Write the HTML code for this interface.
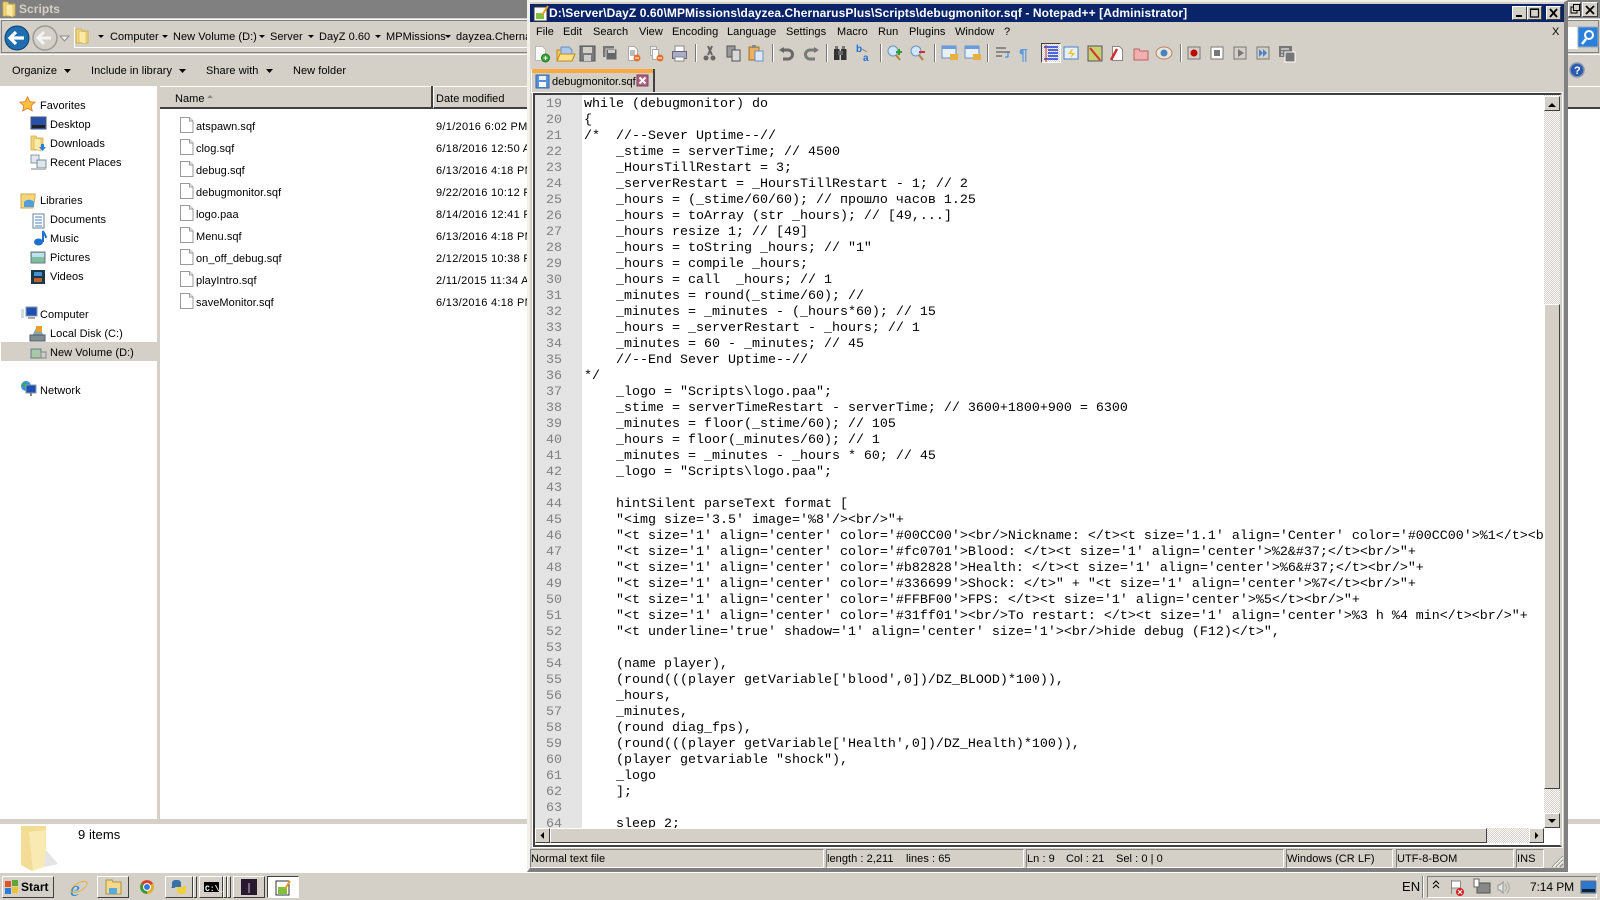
<!DOCTYPE html>
<html><head><meta charset="utf-8"><title>Notepad++</title>
<style>
html,body{margin:0;padding:0;width:1600px;height:900px;overflow:hidden;background:#fff}
body{font-family:"Liberation Sans",sans-serif;font-size:11px;color:#000;position:relative}
.a{position:absolute}
.t{position:absolute;white-space:nowrap;line-height:16px;letter-spacing:.05px;font-size:11px}
.q{letter-spacing:.3px}
.g{background:#d4d0c8}
.r{position:absolute;box-sizing:border-box;background:#d4d0c8;border:1px solid;border-color:#fff #404040 #404040 #fff}
.s{position:absolute;box-sizing:border-box;background:#d4d0c8;border:1px solid;border-color:#808080 #fff #fff #808080}
.d{position:absolute;background:repeating-conic-gradient(#fff 0 25%,#d4d0c8 0 50%) 0 0/2px 2px}
pre{margin:0;font-family:"Liberation Mono",monospace;font-size:13.33px;line-height:16px;position:absolute}
svg{position:absolute;left:0;top:0}
</style></head><body>
<!-- Explorer -->
<div class="a" style="left:0;top:0;width:1600px;height:18px;background:#808080"></div>
<div class="t" style="left:19px;top:2px;font-weight:bold;color:#d4d0c8;font-size:12px;line-height:14px">Scripts</div>
<div class="a g" style="left:0;top:18px;width:1600px;height:68px"></div>
<div class="a" style="left:0;top:19px;width:1600px;height:1px;background:#fff"></div>
<div class="a" style="left:1px;top:20px;width:1598px;height:33px;border:1px solid #808080;box-sizing:border-box"></div>
<div class="a" style="left:74px;top:27px;width:453px;height:21px;border-left:1px solid #fff;border-bottom:1px solid #fff;box-sizing:border-box"></div>
<div class="a" style="left:0;top:54px;width:1600px;height:1px;background:#fff"></div>
<div class="t" style="left:110px;top:29px">Computer</div>
<div class="t" style="left:173px;top:29px">New Volume (D:)</div>
<div class="t" style="left:270px;top:29px">Server</div>
<div class="t" style="left:319px;top:29px">DayZ 0.60</div>
<div class="t" style="left:386px;top:29px">MPMissions</div>
<div class="a" style="left:456px;top:29px;width:71px;overflow:hidden"><div class="t" style="position:static">dayzea.ChernarusPlus</div></div>
<div class="t" style="left:12px;top:63px">Organize</div>
<div class="t" style="left:91px;top:63px">Include in library</div>
<div class="t" style="left:206px;top:63px">Share with</div>
<div class="t" style="left:293px;top:63px">New folder</div>
<!-- nav -->
<div class="a g" style="left:157px;top:86px;width:3px;height:734px"></div>
<div class="a g" style="left:1px;top:342px;width:156px;height:19px"></div>
<div class="t" style="left:40px;top:98px">Favorites</div>
<div class="t" style="left:50px;top:117px">Desktop</div>
<div class="t" style="left:50px;top:136px">Downloads</div>
<div class="t" style="left:50px;top:155px">Recent Places</div>
<div class="t" style="left:40px;top:193px">Libraries</div>
<div class="t" style="left:50px;top:212px">Documents</div>
<div class="t" style="left:50px;top:231px">Music</div>
<div class="t" style="left:50px;top:250px">Pictures</div>
<div class="t" style="left:50px;top:269px">Videos</div>
<div class="t" style="left:40px;top:307px">Computer</div>
<div class="t" style="left:50px;top:326px">Local Disk (C:)</div>
<div class="t" style="left:50px;top:345px">New Volume (D:)</div>
<div class="t" style="left:40px;top:383px">Network</div>
<!-- headers -->
<div class="a g" style="left:160px;top:86px;width:271px;height:23px;border-top:1px solid #fff;border-bottom:2px solid #404040;box-sizing:border-box"></div>
<div class="a" style="left:431px;top:86px;width:2px;height:23px;background:#404040"></div>
<div class="a g" style="left:433px;top:86px;width:94px;height:23px;border-top:1px solid #fff;border-bottom:2px solid #404040;box-sizing:border-box;border-left:1px solid #fff"></div>
<div class="a g" style="left:1568px;top:86px;width:32px;height:23px;border-top:1px solid #fff;border-bottom:2px solid #404040;box-sizing:border-box"></div>
<div class="t" style="left:175px;top:91px">Name</div>
<div class="t" style="left:436px;top:91px">Date modified</div>
<div class="t" style="left:196px;top:119px">atspawn.sqf</div><div class="t q" style="left:436px;top:119px">9/1/2016 6:02 PM</div>
<div class="t" style="left:196px;top:141px">clog.sqf</div><div class="t q" style="left:436px;top:141px">6/18/2016 12:50 A</div>
<div class="t" style="left:196px;top:163px">debug.sqf</div><div class="t q" style="left:436px;top:163px">6/13/2016 4:18 PM</div>
<div class="t" style="left:196px;top:185px">debugmonitor.sqf</div><div class="t q" style="left:436px;top:185px">9/22/2016 10:12 P</div>
<div class="t" style="left:196px;top:207px">logo.paa</div><div class="t q" style="left:436px;top:207px">8/14/2016 12:41 P</div>
<div class="t" style="left:196px;top:229px">Menu.sqf</div><div class="t q" style="left:436px;top:229px">6/13/2016 4:18 PM</div>
<div class="t" style="left:196px;top:251px">on_off_debug.sqf</div><div class="t q" style="left:436px;top:251px">2/12/2015 10:38 P</div>
<div class="t" style="left:196px;top:273px">playIntro.sqf</div><div class="t q" style="left:436px;top:273px">2/11/2015 11:34 A</div>
<div class="t" style="left:196px;top:295px">saveMonitor.sqf</div><div class="t q" style="left:436px;top:295px">6/13/2016 4:18 PM</div>
<!-- details -->
<div class="a g" style="left:0;top:819px;width:1600px;height:5px"></div>
<div class="t" style="left:78px;top:828px;font-size:13px;line-height:14px">9 items</div>
<!-- Notepad++ window -->
<div class="a g" style="left:527px;top:0;width:1041px;height:872px;border:solid;border-width:2px 4px 4px 3px;border-color:#f2f0ea #808080 #808080 #f2f0ea;box-sizing:border-box"></div>
<div class="a" style="left:530px;top:4px;width:1034px;height:18px;background:#0a246a"></div>
<div class="t" style="left:549px;top:6px;color:#fff;font-weight:bold;font-size:12px;letter-spacing:.09px;line-height:14px">D:\Server\DayZ 0.60\MPMissions\dayzea.ChernarusPlus\Scripts\debugmonitor.sqf - Notepad++ [Administrator]</div>
<div class="r" style="left:1512px;top:6px;width:15px;height:14px"></div>
<div class="r" style="left:1527px;top:6px;width:15px;height:14px"></div>
<div class="r" style="left:1546px;top:6px;width:15px;height:14px"></div>
<!-- menu -->
<div class="t" style="left:536px;top:24px">File</div>
<div class="t" style="left:563px;top:24px">Edit</div>
<div class="t" style="left:593px;top:24px">Search</div>
<div class="t" style="left:639px;top:24px">View</div>
<div class="t" style="left:672px;top:24px">Encoding</div>
<div class="t" style="left:727px;top:24px">Language</div>
<div class="t" style="left:786px;top:24px">Settings</div>
<div class="t" style="left:837px;top:24px">Macro</div>
<div class="t" style="left:878px;top:24px">Run</div>
<div class="t" style="left:909px;top:24px">Plugins</div>
<div class="t" style="left:955px;top:24px">Window</div>
<div class="t" style="left:1004px;top:24px">?</div>
<div class="t" style="left:1552px;top:24px">X</div>
<div class="a" style="left:1041px;top:43px;width:20px;height:20px;box-sizing:border-box;border:1px solid;border-color:#404040 #fff #fff #404040;background:repeating-conic-gradient(#fff 0 25%,#d4d0c8 0 50%) 0 0/2px 2px"></div>
<!-- tab -->
<div class="a" style="left:531px;top:69px;width:124px;height:24px;background:#d4d0c8;box-sizing:border-box;border-right:2px solid #404040;border-left:1px solid #fff"></div>
<div class="a" style="left:532px;top:69px;width:121px;height:4px;background:#fcaa3d"></div>
<div class="t" style="left:552px;top:74px;letter-spacing:-.05px">debugmonitor.sqf</div>
<!-- editor -->
<div class="a" style="left:533px;top:93px;width:1029px;height:754px;box-sizing:border-box;border:2px solid;border-color:#404040 #d4d0c8 #404040 #404040;background:#fff;outline:1px solid #fff"></div>
<div class="a" style="left:535px;top:95px;width:47px;height:733px;background:#e4e4e4"></div>
<div class="a" style="left:535px;top:95px;width:1009px;height:733px;overflow:hidden">
<pre style="left:0;top:2px;width:27px;text-align:right;color:#808080">19
20
21
22
23
24
25
26
27
28
29
30
31
32
33
34
35
36
37
38
39
40
41
42
43
44
45
46
47
48
49
50
51
52
53
54
55
56
57
58
59
60
61
62
63
64</pre>
<pre style="left:49px;top:2px;color:#000">while (debugmonitor) do
{
/*  //--Sever Uptime--//
    _stime = serverTime; // 4500
    _HoursTillRestart = 3;
    _serverRestart = _HoursTillRestart - 1; // 2
    _hours = (_stime/60/60); // прошло часов 1.25
    _hours = toArray (str _hours); // [49,...]
    _hours resize 1; // [49]
    _hours = toString _hours; // "1"
    _hours = compile _hours;
    _hours = call  _hours; // 1
    _minutes = round(_stime/60); //
    _minutes = _minutes - (_hours*60); // 15
    _hours = _serverRestart - _hours; // 1
    _minutes = 60 - _minutes; // 45
    //--End Sever Uptime--//
*/
    _logo = "Scripts\logo.paa";
    _stime = serverTimeRestart - serverTime; // 3600+1800+900 = 6300
    _minutes = floor(_stime/60); // 105
    _hours = floor(_minutes/60); // 1
    _minutes = _minutes - _hours * 60; // 45
    _logo = "Scripts\logo.paa";

    hintSilent parseText format [
    "&lt;img size='3.5' image='%8'/&gt;&lt;br/&gt;"+
    "&lt;t size='1' align='center' color='#00CC00'&gt;&lt;br/&gt;Nickname: &lt;/t&gt;&lt;t size='1.1' align='Center' color='#00CC00'&gt;%1&lt;/t&gt;&lt;br/&gt;"+
    "&lt;t size='1' align='center' color='#fc0701'&gt;Blood: &lt;/t&gt;&lt;t size='1' align='center'&gt;%2&amp;#37;&lt;/t&gt;&lt;br/&gt;"+
    "&lt;t size='1' align='center' color='#b82828'&gt;Health: &lt;/t&gt;&lt;t size='1' align='center'&gt;%6&amp;#37;&lt;/t&gt;&lt;br/&gt;"+
    "&lt;t size='1' align='center' color='#336699'&gt;Shock: &lt;/t&gt;" + "&lt;t size='1' align='center'&gt;%7&lt;/t&gt;&lt;br/&gt;"+
    "&lt;t size='1' align='center' color='#FFBF00'&gt;FPS: &lt;/t&gt;&lt;t size='1' align='center'&gt;%5&lt;/t&gt;&lt;br/&gt;"+
    "&lt;t size='1' align='center' color='#31ff01'&gt;&lt;br/&gt;To restart: &lt;/t&gt;&lt;t size='1' align='center'&gt;%3 h %4 min&lt;/t&gt;&lt;br/&gt;"+
    "&lt;t underline='true' shadow='1' align='center' size='1'&gt;&lt;br/&gt;hide debug (F12)&lt;/t&gt;",

    (name player),
    (round(((player getVariable['blood',0])/DZ_BLOOD)*100)),
    _hours,
    _minutes,
    (round diag_fps),
    (round(((player getVariable['Health',0])/DZ_Health)*100)),
    (player getvariable "shock"),
    _logo
    ];

    sleep 2;</pre>
</div>
<!-- scrollbars -->
<div class="d" style="left:1544px;top:95px;width:16px;height:733px"></div>
<div class="r" style="left:1544px;top:96px;width:16px;height:15px"></div>
<div class="r" style="left:1544px;top:304px;width:16px;height:485px"></div>
<div class="r" style="left:1544px;top:813px;width:16px;height:15px"></div>
<div class="d" style="left:535px;top:828px;width:1009px;height:15px"></div>
<div class="r" style="left:535px;top:828px;width:15px;height:15px"></div>
<div class="r" style="left:550px;top:828px;width:937px;height:15px"></div>
<div class="r" style="left:1529px;top:828px;width:15px;height:15px"></div>
<!-- status -->
<div class="s" style="left:530px;top:849px;width:294px;height:19px"></div>
<div class="s" style="left:826px;top:849px;width:198px;height:19px"></div>
<div class="s" style="left:1026px;top:849px;width:258px;height:19px"></div>
<div class="s" style="left:1286px;top:849px;width:107px;height:19px"></div>
<div class="s" style="left:1396px;top:849px;width:118px;height:19px"></div>
<div class="s" style="left:1516px;top:849px;width:28px;height:19px"></div>
<div class="t" style="left:531px;top:851px">Normal text file</div>
<div class="t" style="left:827px;top:851px">length : 2,211</div>
<div class="t" style="left:906px;top:851px">lines : 65</div>
<div class="t" style="left:1027px;top:851px">Ln : 9</div>
<div class="t" style="left:1066px;top:851px">Col : 21</div>
<div class="t" style="left:1116px;top:851px">Sel : 0 | 0</div>
<div class="t" style="left:1287px;top:851px">Windows (CR LF)</div>
<div class="t" style="left:1397px;top:851px">UTF-8-BOM</div>
<div class="t" style="left:1517px;top:851px">INS</div>
<!-- right remainder -->
<div class="r" style="left:1568px;top:2px;width:13px;height:15px"></div>
<div class="r" style="left:1582px;top:2px;width:16px;height:15px"></div>
<div class="a" style="left:1568px;top:27px;width:10px;height:22px;background:#fff"></div>
<!-- taskbar -->
<div class="a g" style="left:0;top:872px;width:1600px;height:28px;border-top:1px solid #fff;box-sizing:border-box"></div>
<div class="r" style="left:2px;top:876px;width:52px;height:22px;border-color:#fff #404040 #404040 #fff"></div>
<div class="t" style="left:21px;top:880px;font-weight:bold;font-size:12px;line-height:14px">Start</div>
<div class="r" style="left:97px;top:876px;width:32px;height:22px"></div>
<div class="r" style="left:165px;top:876px;width:28px;height:22px"></div>
<div class="r" style="left:193px;top:876px;width:4px;height:22px"></div>
<div class="r" style="left:199px;top:876px;width:24px;height:22px"></div>
<div class="r" style="left:223px;top:876px;width:4px;height:22px"></div>
<div class="r" style="left:227px;top:876px;width:4px;height:22px"></div>
<div class="r" style="left:233px;top:876px;width:32px;height:22px"></div>
<div class="a" style="left:267px;top:876px;width:32px;height:22px;box-sizing:border-box;border:1px solid;border-color:#404040 #fff #fff #404040;background:#fff"></div>
<div class="t" style="left:1402px;top:880px;font-size:13px;line-height:14px">EN</div>
<div class="a" style="left:1422px;top:876px;width:1px;height:22px;background:#808080;border-right:1px solid #fff"></div>
<div class="s" style="left:1427px;top:876px;width:170px;height:22px"></div>
<div class="t" style="left:1530px;top:880px;font-size:12px;letter-spacing:-.1px;line-height:14px">7:14 PM</div>
<!-- icons overlay -->
<svg width="1600" height="900" viewBox="0 0 1600 900">
<defs>
<symbol id="f" overflow="visible"><path d="M.5.5h9l3.5 3.5V15.500H.5z" fill="#fff" stroke="#9a9a9a"/><path d="M9.500.5V4H13" fill="#eee" stroke="#9a9a9a"/></symbol>
<symbol id="fold" overflow="visible"><path d="M0 1h5l1 2h6v12H0z" fill="#f2d675" stroke="#c9a94a" stroke-width=".8"/><path d="M3 3l7 1v12l-7-2z" fill="#fbe9a6" stroke="#d4b55c" stroke-width=".6"/></symbol>
</defs>
<!-- explorer title folder -->
<use href="#fold" x="3" y="1"/>
<!-- back / forward -->
<circle cx="45" cy="38" r="12" fill="#d4d0c8" stroke="#9a9a9a" stroke-width="1.500"/>
<path d="M38 38h13M44 32l-6 6 6 6" fill="none" stroke="#f4f4f4" stroke-width="3"/>
<circle cx="17" cy="38" r="12" fill="#1f6fb0" stroke="#0b3f70"/>
<path d="M10 38h14M16 32l-6 6 6 6" fill="none" stroke="#fff" stroke-width="3.200"/>
<path d="M60 36h9l-4.500 5z" fill="#eee" stroke="#8c8c8c"/>
<use href="#fold" x="76" y="28"/>
<g fill="#000">
<path d="M98 35h6l-3 3zM162 35h6l-3 3zM259 35h6l-3 3zM308 35h6l-3 3zM375 35h6l-3 3zM445 35h6l-3 3z"/>
<path d="M64 69h7l-3.500 4zM179 69h7l-3.500 4zM266 69h7l-3.500 4z"/>
</g>
<path d="M207 98h6l-3-3z" fill="#888"/>
<!-- right edge search/help -->
<rect x="1578" y="27" width="20" height="20" fill="#2a7fdc" stroke="#9ab" />
<circle cx="1589" cy="35" r="4" fill="none" stroke="#fff" stroke-width="2"/><path d="M1586 39l-4 5" stroke="#fff" stroke-width="2.500"/>
<circle cx="1577" cy="70" r="7" fill="#2a5bb0" stroke="#8896b0" stroke-width="1.500"/>
<text x="1574" y="74" font-size="11" font-weight="bold" fill="#fff" font-family="Liberation Sans">?</text>
<!-- nav icons -->
<path transform="translate(5.500 20.800) scale(.8)" d="M27.500 95l2.800 6 6.700.7-5 4.500 1.500 6.500-6-3.400-6 3.400 1.500-6.500-5-4.500 6.700-.7z" fill="#f9c43c" stroke="#e8702a" stroke-width="1"/>
<rect x="31" y="117" width="15" height="12" fill="#2a4fa8" stroke="#4a5a7a"/><rect x="32" y="125" width="13" height="3" fill="#222"/>
<use href="#fold" x="31" y="135"/><path d="M41 144h3v3h2l-3.500 4-3.500-4h2z" fill="#2a7fdc"/>
<rect x="31" y="155" width="8" height="8" fill="#e4e8ec" stroke="#8899aa"/><rect x="37" y="160" width="9" height="8" fill="#dfe6ea" stroke="#7a8a9a"/><rect x="31" y="168" width="15" height="2" fill="#c0c0c0"/>
<path d="M21 194h14v4l-2 10H21z" fill="#f5d67a" stroke="#c9a94a"/><path d="M24 202c2-3 8-3 10 0v5H24z" fill="#4f9fe0"/>
<rect x="33" y="214" width="11" height="14" fill="#fff" stroke="#6a7f9a"/><path d="M35 217h7M35 220h7M35 223h7M35 226h7" stroke="#4a80c0"/>
<path d="M43 232v-1c1 3 3 4 3 7M43 232v10" stroke="#1f6fd0" stroke-width="2" fill="none"/><ellipse cx="38.500" cy="242" rx="4.500" ry="3.500" fill="#1f6fd0"/>
<rect x="31" y="252" width="14" height="11" fill="#7fbf9f" stroke="#6a7a8a"/><rect x="32" y="253" width="12" height="4" fill="#bfe0f0"/>
<rect x="31" y="270" width="14" height="14" fill="#1a3a4a"/><rect x="34" y="272" width="8" height="4" fill="#4a90d0"/><rect x="34" y="278" width="8" height="4" fill="#c06030"/>
<rect x="26" y="307" width="11" height="9" fill="#1f4fb0" stroke="#8899aa"/><rect x="21" y="309" width="3" height="9" fill="#cdd"/><rect x="28" y="317" width="7" height="2" fill="#aaa"/>
<path d="M31 338l5-10h4l5 10z" fill="#8aa"/><rect x="30" y="335" width="15" height="6" fill="#7f8f8f" stroke="#557"/><rect x="36" y="326" width="6" height="6" fill="#e8a030"/>
<rect x="31" y="349" width="10" height="9" fill="#a8c8a8" stroke="#6a7a8a"/><rect x="41" y="352" width="5" height="6" fill="#ccc" stroke="#888"/>
<circle cx="26" cy="386" r="5" fill="#3a8fe0"/><path d="M22 384c2-2 4-2 5 1s-2 3-3 2z" fill="#3ab04a"/><rect x="26" y="385" width="10" height="8" fill="#1f4fb0" stroke="#8899aa"/><rect x="30" y="393" width="2" height="3" fill="#888"/>
<!-- files -->
<use href="#f" x="180" y="117"/><use href="#f" x="180" y="139"/><use href="#f" x="180" y="161"/><use href="#f" x="180" y="183"/><use href="#f" x="180" y="205"/><use href="#f" x="180" y="227"/><use href="#f" x="180" y="249"/><use href="#f" x="180" y="271"/><use href="#f" x="180" y="293"/>
<!-- details folder -->
<path d="M21 826h25v40l-14 5-11-6z" fill="#f3dc96"/><path d="M29 832l17-2v36l-13 5z" fill="#f9eab4"/><path d="M46 850l12 14-14 3z" fill="#e4e4e4"/>
<!-- npp title icon -->
<rect x="534" y="7" width="13" height="14" fill="#fff" stroke="#333"/><rect x="536" y="13" width="8" height="6" fill="#7ec23c"/><path d="M536 7v-2M539 7v-2M542 7v-2M545 7v-2" stroke="#333"/>
<path d="M542 15l6-9" stroke="#e4a020" stroke-width="2"/>
<!-- caption -->
<rect x="1516" y="15" width="6" height="2"/><rect x="1530.500" y="9" width="8" height="8" fill="none" stroke="#000" stroke-width="1.200"/><rect x="1530" y="8.500" width="9" height="1.500"/>
<path d="M1550 9l7 8M1557 9l-7 8" stroke="#000" stroke-width="1.800"/>
<rect x="1571" y="7" width="6" height="6" fill="none" stroke="#000"/><rect x="1573.500" y="4.500" width="6" height="6" fill="#d4d0c8" stroke="#000"/>
<path d="M1586 6l8 8M1594 6l-8 8" stroke="#000" stroke-width="1.800"/>
<!-- toolbar: New -->
<path d="M535.500 46.500h7l3 3v11h-10z" fill="#fff" stroke="#bbb"/><circle cx="545.500" cy="58" r="4" fill="#3aa53a" stroke="#1e7a1e"/><path d="M543.500 58h4M545.500 56v4" stroke="#fff"/>
<path d="M557 50h5l1 2h9v9h-15z" fill="#f5c860" stroke="#c08a20"/><path d="M561 47h8l3 3v4h-11z" fill="#a8c8f0" stroke="#6a90c0"/><path d="M557 61l3-7h15l-3 7z" fill="#fbe08a" stroke="#c08a20"/>
<rect x="580" y="46" width="15" height="15" fill="#7a7a7a" stroke="#555"/><rect x="583" y="47" width="9" height="6" fill="#d4d0c8"/><rect x="584" y="55" width="7" height="6" fill="#ccc"/>
<rect x="603" y="46" width="11" height="11" fill="#777"/><rect x="606" y="49" width="11" height="11" fill="#666" stroke="#d4d0c8"/><rect x="608" y="50" width="7" height="3" fill="#ccc"/>
<path d="M628.500 46.500h6l3 3v11h-9z" fill="#fff" stroke="#aaa"/><path d="M630 51h5M630 53h5M630 55h5" stroke="#777"/><circle cx="637" cy="58" r="3.500" fill="#e8702a"/><path d="M635 58h4" stroke="#fff"/>
<path d="M650.500 46.500h6v9h-6z" fill="#eee" stroke="#aaa"/><path d="M652.500 49.500h6v10h-6z" fill="#fff" stroke="#aaa"/><circle cx="660" cy="58" r="3.500" fill="#e8702a"/><path d="M658 58h4" stroke="#fff"/>
<rect x="675" y="46" width="9" height="6" fill="#fff" stroke="#888"/><rect x="672.500" y="51.500" width="14" height="7" fill="#a8b0c8" stroke="#667"/><rect x="675" y="57" width="9" height="4" fill="#fff" stroke="#888"/>
<path d="M695.500 44v18M772.500 44v18M826.500 44v18M880.500 44v18M934.500 44v18M987.500 44v18M1180.500 44v18" stroke="#777"/><path d="M696.500 44v18M773.500 44v18M827.500 44v18M881.500 44v18M935.500 44v18M988.500 44v18M1181.500 44v18" stroke="#fff"/>
<path d="M712 46l-4 9M708 46l4 9" stroke="#666" stroke-width="2"/><circle cx="706" cy="58" r="2.500" fill="#666"/><circle cx="713" cy="58" r="2.500" fill="#666"/>
<rect x="727" y="46" width="8" height="11" fill="#999" stroke="#555"/><rect x="732" y="50" width="8" height="11" fill="#d8d8d8" stroke="#555"/>
<rect x="749" y="47" width="10" height="13" fill="#e8b060" stroke="#a07020"/><rect x="752" y="45" width="4" height="3" fill="#888"/><rect x="755" y="51" width="8" height="10" fill="#dde8f8" stroke="#6a90c0"/>
<path d="M781 50h7a4.500 4.500 0 0 1 0 9h-5" fill="none" stroke="#6a6a6a" stroke-width="3"/><path d="M779 50l5-3v6z" fill="#666"/>
<path d="M817 50h-7a4.500 4.500 0 0 0 0 9h5" fill="none" stroke="#7a7a7a" stroke-width="3"/><path d="M819 50l-5-3v6z" fill="#777"/>
<rect x="834" y="49" width="5.500" height="11" fill="#333"/><rect x="841" y="49" width="5.500" height="11" fill="#333"/><rect x="838" y="51" width="5" height="4" fill="#666"/><rect x="835" y="46" width="3" height="3" fill="#777"/><rect x="842" y="46" width="3" height="3" fill="#777"/>
<text x="856" y="52" font-size="10" font-weight="bold" fill="#1f6fd0" font-family="Liberation Sans">b</text><text x="863" y="61" font-size="10" font-weight="bold" fill="#1f6fd0" font-family="Liberation Sans">a</text><path d="M862 49l5 3" stroke="#888"/>
<circle cx="893" cy="51" r="5" fill="#cfe8ff" stroke="#6a90c0"/><path d="M896 55l4 5" stroke="#b08040" stroke-width="2"/><path d="M896 52h6M899 49v6" stroke="#2aa02a" stroke-width="2"/>
<circle cx="916" cy="51" r="5" fill="#cfe8ff" stroke="#6a90c0"/><path d="M919 55l4 5" stroke="#b08040" stroke-width="2"/><path d="M919 52h6" stroke="#d03030" stroke-width="2"/>
<rect x="942" y="46" width="14" height="12" fill="#e8f0fa" stroke="#6a90c0"/><rect x="942" y="46" width="14" height="3" fill="#6a9ae0"/><rect x="950" y="54" width="8" height="6" fill="#e8b040"/>
<rect x="965" y="46" width="14" height="12" fill="#e8f0fa" stroke="#6a90c0"/><rect x="965" y="46" width="14" height="3" fill="#6a9ae0"/><rect x="973" y="54" width="8" height="6" fill="#e8b040"/>
<path d="M996 48h10M996 52h14M996 56h6" stroke="#444"/><path d="M1008 52v5h-3" fill="none" stroke="#2a7fdc"/>
<text x="1019" y="60" font-size="16" font-weight="bold" fill="#5a9ae0" font-family="Liberation Sans">¶</text>
<path d="M1044 47h14M1048 50h10M1048 53h10M1048 56h10M1044 59h14" stroke="#1a3adc" stroke-width="1.500"/><path d="M1046 45v17" stroke="#d03030"/>
<rect x="1064" y="47" width="14" height="12" fill="#e8f0fa" stroke="#4a80d0"/><path d="M1072 49l-4 5h4l-2 5 5-6h-4l2-4z" fill="#f0c030"/>
<rect x="1088" y="46" width="14" height="15" fill="#c8d070" stroke="#556"/><path d="M1090 48l10 12" stroke="#d03030" stroke-width="2"/>
<path d="M1112.500 46.500h7l3 3v11h-10z" fill="#fff" stroke="#888"/><path d="M1111 60l6-11" stroke="#d03030" stroke-width="2.500"/>
<path d="M1134 49h5l1 2h8v9h-14z" fill="#f0b0b0" stroke="#c06060"/>
<ellipse cx="1164" cy="53" rx="8" ry="6" fill="#e8e8d8" stroke="#c08060"/><circle cx="1164" cy="53" r="3.500" fill="#4a80c0"/>
<rect x="1188" y="47" width="12" height="12" fill="#d4d0c8" stroke="#777"/><circle cx="1194" cy="53" r="3.500" fill="#c00000"/>
<rect x="1211" y="47" width="12" height="12" fill="#fff" stroke="#777"/><rect x="1214" y="50" width="6" height="6" fill="#777"/>
<rect x="1234" y="47" width="12" height="12" fill="#d4d0c8" stroke="#777"/><path d="M1238 49l6 4-6 4z" fill="#777"/>
<rect x="1257" y="47" width="12" height="12" fill="#d4d0c8" stroke="#777"/><path d="M1259 49l4 4-4 4zM1263 49l4 4-4 4z" fill="#4a80d0"/>
<rect x="1279" y="46" width="13" height="11" fill="#777"/><rect x="1285" y="52" width="10" height="10" fill="#777" stroke="#fff"/><path d="M1281 49h8M1281 52h2M1281 55h2" stroke="#fff"/>
<!-- tab icon / close -->
<rect x="536" y="75" width="13" height="13" fill="#5a90d8" stroke="#3a6ab0"/><rect x="539" y="76" width="7" height="4" fill="#e8f0fa"/><rect x="539" y="82" width="7" height="5" fill="#fff"/>
<rect x="637" y="75" width="11" height="11" fill="#b06080" stroke="#804060"/><path d="M639.500 77.500l6 6M645.500 77.500l-6 6" stroke="#fff" stroke-width="2"/>
<!-- scroll arrows -->
<path d="M1548 107h8l-4-4z M1548 819h8l-4 4z M544 832v7l-3.500-3.500z M1535 832v7l3.500-3.500z"/>
<!-- grip -->
<path d="M1552 867l11-11M1556 867l7-7M1560 867l3-3" stroke="#808080"/><path d="M1553 867l10-10M1557 867l6-6" stroke="#fff"/>
<!-- taskbar icons -->
<rect x="5" y="881" width="6" height="6" fill="#e8502a"/><rect x="12" y="880" width="6" height="6" fill="#5aa83a"/><rect x="5" y="888" width="6" height="6" fill="#2a7fdc"/><rect x="12" y="887" width="6" height="6" fill="#f0c030"/>
<text x="70" y="896" font-size="22" font-style="italic" fill="#2a8fdc" font-family="Liberation Serif">e</text><ellipse cx="79" cy="887" rx="9" ry="4" fill="none" stroke="#e8b040" transform="rotate(-30 79 887)"/>
<path d="M106 880h6l1 2h8v12h-15z" fill="#f3d98a" stroke="#b09040"/><rect x="109" y="888" width="8" height="6" fill="#5aa8e0"/>
<circle cx="147" cy="887" r="7" fill="#ddb030"/><path d="M147 887L141 883.500A7 7 0 0 1 153 883.500z" fill="#d8402a"/><path d="M147 887L141 883.500A7 7 0 0 0 147 894z" fill="#3a9a3a"/><circle cx="147" cy="887" r="3.500" fill="#3a78d8" stroke="#fff"/>
<path d="M172 887v-4a3 3 0 0 1 3-3h3a3 3 0 0 1 3 3v4h-6v1h-4z" fill="#3a72a8"/><path d="M186 886v5a3 3 0 0 1-3 3h-3a3 3 0 0 1-3-3v-4h6v-1z" fill="#f0d040"/>
<rect x="204" y="882" width="15" height="10" fill="#000"/><text x="205" y="891" font-size="8" font-weight="bold" fill="#fff" font-family="Liberation Mono">C:\_</text>
<rect x="241" y="879" width="16" height="16" fill="#2a1a30"/><path d="M249 883v10" stroke="#7a6a8a" stroke-width="2"/>
<rect x="276" y="881" width="13" height="14" fill="#fff" stroke="#333"/><rect x="278" y="887" width="9" height="7" fill="#7ec23c"/><path d="M285 889l5-8" stroke="#e4a020" stroke-width="2"/>
<!-- tray -->
<path d="M1433 884l3-3 3 3M1433 888l3-3 3 3" fill="none" stroke="#000"/>
<path d="M1451.500 880v14M1451.500 881h9v7h-9" fill="#fff" stroke="#888"/><circle cx="1460" cy="892" r="4" fill="#d02020"/><path d="M1458 890l4 4M1462 890l-4 4" stroke="#fff"/>
<rect x="1477" y="883" width="13" height="10" fill="#888" stroke="#555"/><rect x="1474" y="879" width="5" height="8" fill="#fff" stroke="#666"/>
<path d="M1498 885h2l3-3v11l-3-3h-2z" fill="#e8e8e8" stroke="#999"/><path d="M1505 884c2 2 2 5 0 7M1507 882c3 3 3 8 0 11" fill="none" stroke="#aaa"/>
<rect x="1581" y="881" width="15" height="12" fill="#2a78d0" stroke="#667"/><rect x="1582" y="889" width="13" height="3" fill="#123"/>
</svg>
</body></html>
